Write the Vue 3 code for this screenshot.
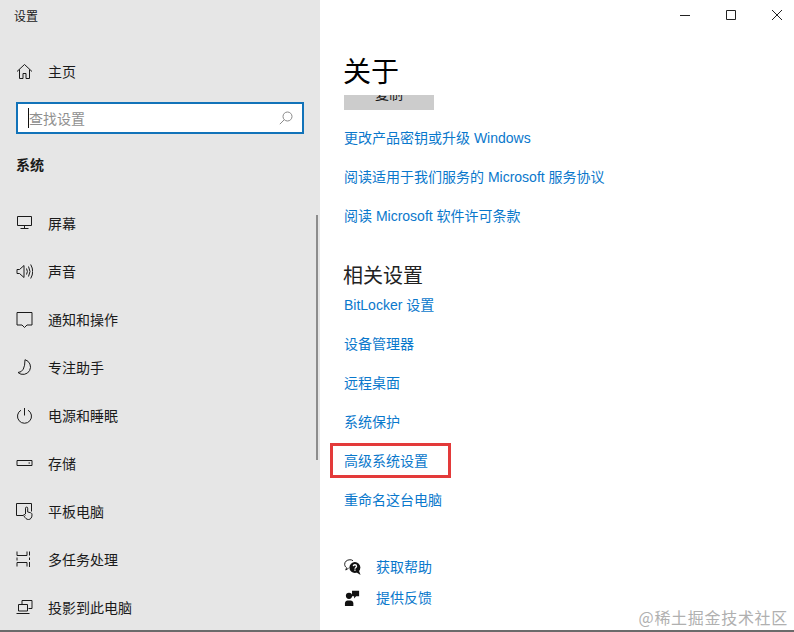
<script setup>
const nav = [
  { label: '屏幕', icon: 'M1.500 1.500h14v9h-14zM8.500 10.500v3M4.500 13.500h8' },
  { label: '声音', icon: 'M1 6.500h2.500L8 2.500v12l-4.500-4H1zM10.500 5.500q1.800 3 0 6M12.500 3.500q3 5 0 10M14.700 1.500q4 7 0 14' },
  { label: '通知和操作', icon: 'M1 1.500h15v12.500h-5l-2.500 2.500L6 14H1z' },
  { label: '专注助手', icon: 'M9 .7a7.500 7.500 0 1 1-7 12.800q7-.2 7-12.800z' },
  { label: '电源和睡眠', icon: 'M8.500 1v7.500M5 3.200a7 7 0 1 0 7 0' },
  { label: '存储', icon: 'M1 5.500h15v5H1zM12.500 8h1.500' },
  { label: '平板电脑', icon: 'M7 12.500H.5v-12h15v8M9.500 11V5.200a1.100 1.100 0 0 1 2.200 0V9l2.800.7c1.200.3 1.500 1 1.500 2.300 0 2.800-1.500 4.500-3.500 4.500s-3-1-5-4.200l.6-1 1.400 1' },
  { label: '多任务处理', icon: 'M1 .5v4h10v-4M1 15.500v-4h10v4M1 6.500v3M13.500 .5v4M13.500 11v5M13.500 6.500v2.500' },
  { label: '投影到此电脑', icon: 'M6 5V1.500h10v8h-3.500M2.500 5.500h9v6.500h-9zM.5 14.500h13' },
]
const about = ['更改产品密钥或升级 Windows', '阅读适用于我们服务的 Microsoft 服务协议', '阅读 Microsoft 软件许可条款']
const related = ['BitLocker 设置', '设备管理器', '远程桌面', '系统保护', '高级系统设置', '重命名这台电脑']
</script>

<template>
  <div class="window">
    <aside class="sidebar">
      <div class="app-title">设置</div>
      <div class="nav-row home">
        <svg class="icon" viewBox="0 0 17 17"><path d="M1 8.500 8.500 1.500 16 8.500M3.500 6.500V15.500h3.500v-5h3v5h3.500V6.500" /></svg>
        <span>主页</span>
      </div>
      <div class="search">
        <span class="caret"></span>
        <span class="placeholder">查找设置</span>
        <svg class="search-icon" viewBox="0 0 14 14"><circle cx="8.500" cy="5.500" r="4.500" /><path d="M5.300 8.700.8 13.200" /></svg>
      </div>
      <div class="section">系统</div>
      <div class="nav-list">
        <div v-for="item in nav" :key="item.label" class="nav-row">
          <svg class="icon" viewBox="0 0 17 17"><path :d="item.icon" /></svg>
          <span>{{ item.label }}</span>
        </div>
      </div>
      <div class="scrollbar"></div>
    </aside>

    <main class="content">
      <div class="controls">
        <svg viewBox="0 0 10 10"><path d="M0 5.500h10" /></svg>
        <svg viewBox="0 0 10 10"><path d="M.5 .5h9v9h-9z" /></svg>
        <svg viewBox="0 0 10 10"><path d="M0 0l10 10M10 0 0 10" /></svg>
      </div>
      <h1>关于</h1>
      <div class="copy-btn"><span>复制</span></div>
      <div class="links first">
        <a v-for="t in about" :key="t">{{ t }}</a>
      </div>
      <h2>相关设置</h2>
      <div class="links">
        <a v-for="t in related" :key="t" :class="{ marked: t === '高级系统设置' }">{{ t }}</a>
      </div>
      <div class="help">
        <div class="help-row">
          <svg viewBox="0 0 18 18">
            <path class="thin" d="M9.500 1.800C8.600 1 7.500.8 6.300.8 3 .8.700 2.900.7 5.600c0 1.500.8 2.800 2 3.600l-.8 2.500 3-2" />
            <circle cx="11.500" cy="9" r="5.800" class="solid" />
            <path class="solid" d="M13 14l4.500 3-1.800-5z" />
            <path class="q" d="M9.800 7.600c.2-2 3.500-2 3.500 0 0 1.300-1.700 1.300-1.700 2.700M11.600 11.200v1.200" />
          </svg>
          <a>获取帮助</a>
        </div>
        <div class="help-row">
          <svg viewBox="0 0 18 18">
            <circle cx="5.300" cy="6.200" r="3.300" class="solid" />
            <path class="solid" d="M1 17v-2.800c0-2 1.300-3.200 2.800-3.200h3.200c1.500 0 2.900 1.200 2.900 3.200V17z" />
            <path class="solid" d="M8.500 .8h7.500v5.700h-3.200L10.700 9V6.500H8.500z" />
          </svg>
          <a>提供反馈</a>
        </div>
      </div>
    </main>
    <div class="watermark">@稀土掘金技术社区</div>
  </div>
</template>

<style>
html, body { margin: 0; background: #fff; }
</style>

<style scoped>
.window {
  position: relative;
  width: 794px;
  height: 632px;
  box-sizing: border-box;
  display: flex;
  overflow: hidden;
  border-bottom: 2px solid #6b6b6b;
  font-family: "Liberation Sans", "Noto Sans CJK SC", sans-serif;
  color: #1a1a1a;
  background: #fff;
}
.sidebar {
  position: relative;
  flex: 0 0 320px;
  background: #e6e6e6;
  box-sizing: border-box;
  padding-top: 9px;
}
.app-title {
  font-size: 12px;
  line-height: 16px;
  padding-left: 14px;
}
.nav-row {
  display: flex;
  align-items: center;
  height: 48px;
  padding-left: 16px;
  font-size: 14px;
  gap: 15px;
}
.home { margin-top: 22px; }
.icon {
  width: 17px;
  height: 17px;
  flex: none;
  fill: none;
  stroke: #1a1a1a;
  stroke-width: 1;
}
.search {
  display: flex;
  align-items: center;
  box-sizing: border-box;
  width: 288px;
  height: 32px;
  margin: 7px 0 0 16px;
  padding: 0 9px 0 10px;
  background: #fff;
  border: 2px solid #1273b9;
}
.caret {
  width: 1px;
  height: 20px;
  background: #111;
  flex: none;
}
.placeholder {
  flex: 1;
  font-size: 14px;
  color: #8f8f8f;
}
.search-icon {
  width: 14px;
  height: 14px;
  fill: none;
  stroke: #8a8a8a;
  stroke-width: 1;
}
.section {
  margin: 21px 0 0 16px;
  font-size: 14px;
  line-height: 20px;
  font-weight: 700;
}
.nav-list { margin-top: 24px; }
.scrollbar {
  position: absolute;
  left: 316px;
  top: 215px;
  width: 2px;
  height: 245px;
  background: #8c8c8c;
}
.content {
  position: relative;
  flex: 1;
  padding-left: 24px;
  box-sizing: border-box;
}
.controls {
  position: absolute;
  top: 10px;
  right: 12px;
  display: flex;
  gap: 36px;
}
.controls svg {
  width: 10px;
  height: 10px;
  fill: none;
  stroke: #222;
  stroke-width: 1;
}
h1 {
  margin: 53px 0 0 -1px;
  font-size: 28px;
  line-height: 40px;
  font-weight: 400;
  color: #000;
}
.copy-btn {
  width: 90px;
  height: 15px;
  margin-top: 2px;
  overflow: hidden;
  background: #ccc;
  text-align: center;
  font-size: 14px;
  line-height: 20px;
}
.copy-btn span {
  display: block;
  margin-top: -11px;
}
.links {
  display: flex;
  flex-direction: column;
  gap: 19px;
  align-items: flex-start;
}
.links.first { margin-top: 18px; }
a {
  font-size: 14px;
  line-height: 20px;
  color: #0a78cc;
}
.marked { position: relative; }
.marked::after {
  content: "";
  position: absolute;
  left: -14px;
  top: -8px;
  width: 121px;
  height: 35px;
  box-sizing: border-box;
  border: 3px solid #e33a3a;
}
h2 {
  margin: 36px 0 5px -1px;
  font-size: 20px;
  line-height: 28px;
  font-weight: 400;
  color: #222;
}
.help {
  margin-top: 47px;
  display: flex;
  flex-direction: column;
  gap: 11px;
}
.help-row {
  display: flex;
  align-items: center;
  gap: 15px;
}
.help-row svg {
  width: 17px;
  height: 17px;
  flex: none;
}
.solid { fill: #111; stroke: none; }
.thin { fill: none; stroke: #111; stroke-width: 1; }
.q { fill: none; stroke: #fff; stroke-width: 1.400; }
.watermark {
  position: absolute;
  right: 6px;
  bottom: 3px;
  font-family: "Noto Sans CJK SC", serif;
  font-size: 16px;
  line-height: 20px;
  letter-spacing: 0.700px;
  color: #b0b0b0;
}
</style>
